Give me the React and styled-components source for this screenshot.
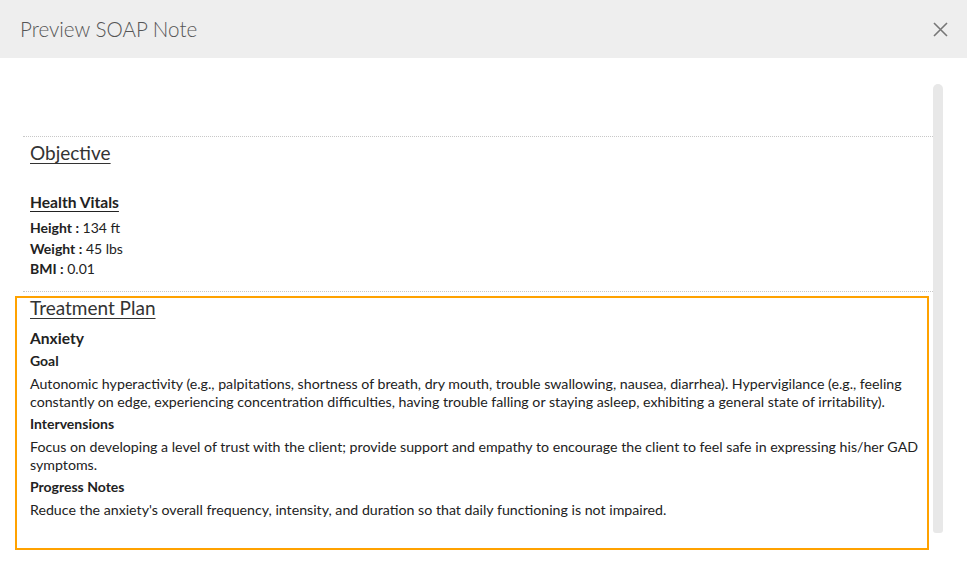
import React from 'react';
import styled, { createGlobalStyle } from 'styled-components';

const GlobalStyle = createGlobalStyle`
  html, body {
    margin: 0;
    padding: 0;
    background: #ffffff;
    font-family: 'Lato', 'Open Sans', sans-serif;
  }
`;

const Modal = styled.div`
  width: 967px;
  height: 588px;
  background: #fff;
  display: flex;
  flex-direction: column;
  overflow: hidden;
`;

const Header = styled.div`
  height: 58px;
  background: #eeeeee;
  display: flex;
  align-items: center;
  justify-content: space-between;
  padding: 0 19px 0 20px;
  box-sizing: border-box;
  flex-shrink: 0;
`;

const Title = styled.h2`
  margin: 0;
  font-size: 20.6px;
  font-weight: 300;
  color: #555;
`;

const CloseButton = styled.button`
  border: 0;
  background: none;
  padding: 0;
  width: 16px;
  height: 16px;
  display: flex;
  align-items: center;
  justify-content: center;
  cursor: pointer;
`;

const Body = styled.div`
  display: flex;
  padding: 26px 24px 0 15px;
  gap: 4px;
  flex: 1;
`;

const Content = styled.div`
  flex: 1;
  padding-top: 52px;
`;

const ScrollThumb = styled.div`
  width: 10px;
  height: 449px;
  background: #e8e8e8;
  border-radius: 5px 5px 3px 3px;
`;

const Separator = styled.div`
  margin-left: 8px;
  margin-right: -4px;
  border-top: 1px dotted #c8c8c8;
`;

const Section = styled.section`
  padding: 6px 0 11px 15px;
`;

const Highlight = styled.section`
  border: 2px solid #ffa200;
  padding: 0 0 29px 13px;
  margin-top: 4px;
`;

const SectionTitle = styled.h3`
  margin: 0;
  font-size: 19px;
  font-weight: 400;
  line-height: 20px;
  color: #333;
  text-decoration: underline;
  text-underline-offset: 3px;
  text-decoration-thickness: 1px;
`;

const GroupTitle = styled.h4`
  margin: ${p => (p.$underline ? '28px 0 5px' : '9px 0 2px')};
  font-size: 15.6px;
  font-weight: 700;
  line-height: 22px;
  color: #222;
  text-decoration: ${p => (p.$underline ? 'underline' : 'none')};
  text-underline-offset: 3px;
`;

const Label = styled.div`
  font-size: 14px;
  font-weight: 700;
  line-height: 18px;
  color: #222;
  margin-top: ${p => (p.$first ? '3px' : '4px')};
`;

const Text = styled.p`
  margin: 5px 0 0;
  font-size: 14.2px;
  line-height: 18px;
  color: #222;
`;

const VitalRow = styled.div`
  font-size: 14px;
  line-height: 20.5px;
  color: #222;

  b {
    font-weight: 700;
  }
`;

const vitals = [
  { label: 'Height', value: '134 ft' },
  { label: 'Weight', value: '45 lbs' },
  { label: 'BMI', value: '0.01' },
];

const plan = [
  {
    label: 'Goal',
    text: 'Autonomic hyperactivity (e.g., palpitations, shortness of breath, dry mouth, trouble swallowing, nausea, diarrhea). Hypervigilance (e.g., feeling constantly on edge, experiencing concentration difficulties, having trouble falling or staying asleep, exhibiting a general state of irritability).',
  },
  {
    label: 'Intervensions',
    text: 'Focus on developing a level of trust with the client; provide support and empathy to encourage the client to feel safe in expressing his/her GAD symptoms.',
  },
  {
    label: 'Progress Notes',
    text: "Reduce the anxiety's overall frequency, intensity, and duration so that daily functioning is not impaired.",
  },
];

export default function App() {
  return (
    <>
      <GlobalStyle />
      <Modal>
        <Header>
          <Title>Preview SOAP Note</Title>
          <CloseButton aria-label="Close">
            <svg width="15" height="15" viewBox="0 0 15 15">
              <path d="M1 1L14 14M14 1L1 14" stroke="#777" strokeWidth="1.6" />
            </svg>
          </CloseButton>
        </Header>
        <Body>
          <Content>
            <Separator />
            <Section>
              <SectionTitle>Objective</SectionTitle>
              <GroupTitle $underline>Health Vitals</GroupTitle>
              {vitals.map(v => (
                <VitalRow key={v.label}>
                  <b>{v.label} :</b> {v.value}
                </VitalRow>
              ))}
            </Section>
            <Separator />
            <Highlight>
              <SectionTitle>Treatment Plan</SectionTitle>
              <GroupTitle>Anxiety</GroupTitle>
              {plan.map((p, i) => (
                <React.Fragment key={p.label}>
                  <Label $first={i === 0}>{p.label}</Label>
                  <Text>{p.text}</Text>
                </React.Fragment>
              ))}
            </Highlight>
          </Content>
          <ScrollThumb />
        </Body>
      </Modal>
    </>
  );
}
